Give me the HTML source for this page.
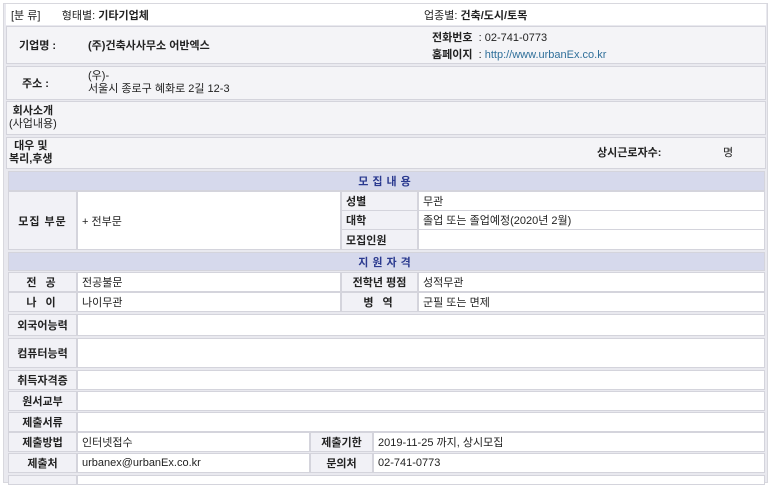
<!DOCTYPE html>
<html><head><meta charset="utf-8"><style>
*{margin:0;padding:0;box-sizing:border-box}
body{width:773px;height:478px;background:#fff;font-family:"Liberation Sans","Noto Sans CJK KR","NanumGothic",sans-serif;font-size:11px;color:#222;position:relative;overflow:hidden}
.frame{position:absolute;left:3px;top:3px;width:765px;height:480px;border:1px solid #d8d8de;background:#e9e9ef}
.c{position:absolute;border:1px solid #d4d4dc;background:#fff;display:flex;align-items:center;padding-left:4px;white-space:nowrap}
.g{background:#f4f4f7}
.l{background:#f1f1f6;justify-content:center;padding:0;font-weight:bold}
.h{background:#d6d9ec;justify-content:center;color:#2b3a8f;font-weight:bold;letter-spacing:4px;padding:0}
b{font-weight:bold}
</style></head><body>
<div class="frame"></div>
<div class="c" style="left:6px;top:4px;width:760px;height:21px;border-color:#fff">[분 류]&nbsp;&nbsp;&nbsp;&nbsp;&nbsp;&nbsp;&nbsp;형태별: <b>&nbsp;기타기업체</b><span style="position:absolute;left:417px">업종별: <b>건축/도시/토목</b></span></div>
<div class="c g" style="left:6px;top:26px;width:760px;height:38px"><b style="margin-left:8px">기업명 :</b><b style="position:absolute;left:81px">(주)건축사사무소 어반엑스</b>
<span style="position:absolute;left:425px;top:2px"><b>전화번호</b>&nbsp;&nbsp;: 02-741-0773</span>
<span style="position:absolute;left:425px;top:19px"><b>홈페이지</b>&nbsp;&nbsp;: <span style="color:#2f6f9a">http://www.urbanEx.co.kr</span></span></div>
<div class="c g" style="left:6px;top:66px;width:760px;height:34px"><b style="margin-left:11px">주소 :</b><span style="position:absolute;left:81px;top:3px;line-height:13px">(우)-<br>서울시 종로구 혜화로 2길 12-3</span></div>
<div class="c g" style="left:6px;top:101px;width:760px;height:34px;line-height:13px;padding-left:2px"><div style="text-align:center"><b>회사소개</b><br>(사업내용)</div></div>
<div class="c g" style="left:6px;top:137px;width:760px;height:32px;line-height:13px;padding-left:2px"><div style="text-align:center"><b>대우 및</b><br><b>복리,후생</b></div><b style="position:absolute;left:590px">상시근로자수:</b><span style="position:absolute;left:716px">명</span></div>
<div class="c h" style="left:8px;top:171px;width:757px;height:20px">모집내용</div>
<div class="c l" style="left:8px;top:191px;width:69px;height:59px;letter-spacing:1px">모집 부문</div>
<div class="c" style="left:77px;top:191px;width:264px;height:59px">+ 전부문</div>
<div class="c l" style="left:341px;top:191px;width:77px;height:20px;justify-content:flex-start;padding-left:4px">성별</div>
<div class="c" style="left:418px;top:191px;width:347px;height:20px">무관</div>
<div class="c l" style="left:341px;top:210px;width:77px;height:20px;justify-content:flex-start;padding-left:4px">대학</div>
<div class="c" style="left:418px;top:210px;width:347px;height:20px">졸업 또는 졸업예정(2020년 2월)</div>
<div class="c l" style="left:341px;top:229px;width:77px;height:21px;justify-content:flex-start;padding-left:4px">모집인원</div>
<div class="c" style="left:418px;top:229px;width:347px;height:21px"></div>
<div class="c h" style="left:8px;top:252px;width:757px;height:19px">지원자격</div>
<div class="c l" style="left:8px;top:272px;width:69px;height:20px;letter-spacing:3px">전 공</div>
<div class="c" style="left:77px;top:272px;width:264px;height:20px">전공불문</div>
<div class="c l" style="left:341px;top:272px;width:77px;height:20px">전학년 평점</div>
<div class="c" style="left:418px;top:272px;width:347px;height:20px">성적무관</div>
<div class="c l" style="left:8px;top:292px;width:69px;height:20px;letter-spacing:3px">나 이</div>
<div class="c" style="left:77px;top:292px;width:264px;height:20px">나이무관</div>
<div class="c l" style="left:341px;top:292px;width:77px;height:20px;letter-spacing:3px">병 역</div>
<div class="c" style="left:418px;top:292px;width:347px;height:20px">군필 또는 면제</div>
<div class="c l" style="left:8px;top:314px;width:69px;height:22px">외국어능력</div>
<div class="c" style="left:77px;top:314px;width:688px;height:22px"></div>
<div class="c l" style="left:8px;top:338px;width:69px;height:30px">컴퓨터능력</div>
<div class="c" style="left:77px;top:338px;width:688px;height:30px"></div>
<div class="c l" style="left:8px;top:370px;width:69px;height:20px">취득자격증</div>
<div class="c" style="left:77px;top:370px;width:688px;height:20px"></div>
<div class="c l" style="left:8px;top:391px;width:69px;height:20px">원서교부</div>
<div class="c" style="left:77px;top:391px;width:688px;height:20px"></div>
<div class="c l" style="left:8px;top:412px;width:69px;height:20px">제출서류</div>
<div class="c" style="left:77px;top:412px;width:688px;height:20px"></div>
<div class="c l" style="left:8px;top:432px;width:69px;height:20px">제출방법</div>
<div class="c" style="left:77px;top:432px;width:233px;height:20px">인터넷접수</div>
<div class="c l" style="left:310px;top:432px;width:63px;height:20px">제출기한</div>
<div class="c" style="left:373px;top:432px;width:392px;height:20px">2019-11-25 까지, 상시모집</div>
<div class="c l" style="left:8px;top:453px;width:69px;height:20px">제출처</div>
<div class="c" style="left:77px;top:453px;width:233px;height:20px">urbanex@urbanEx.co.kr</div>
<div class="c l" style="left:310px;top:453px;width:63px;height:20px">문의처</div>
<div class="c" style="left:373px;top:453px;width:392px;height:20px">02-741-0773</div>
<div class="c l" style="left:8px;top:475px;width:69px;height:10px"></div>
<div class="c" style="left:77px;top:475px;width:688px;height:10px"></div>
</body></html>
